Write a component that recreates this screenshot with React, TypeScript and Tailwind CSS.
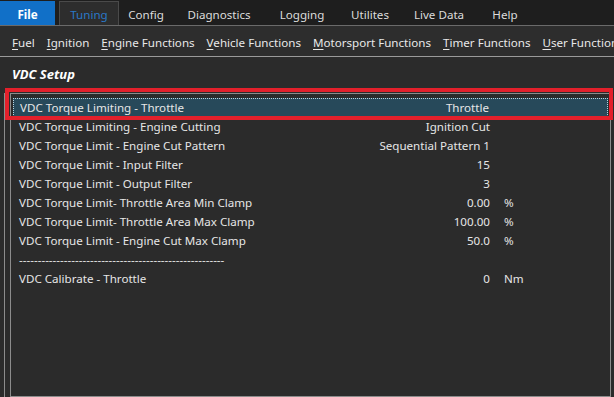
const tabs = [
  { label: 'Config', w: 'w-[54px]' },
  { label: 'Diagnostics', w: 'w-[92px]' },
  { label: 'Logging', w: 'w-[74px]' },
  { label: 'Utilites', w: 'w-[62px]' },
  { label: 'Live Data', w: 'w-[76px]' },
  { label: 'Help', w: 'w-[56px]' },
]

const menus = [
  ['F', 'uel'],
  ['I', 'gnition'],
  ['E', 'ngine Functions'],
  ['V', 'ehicle Functions'],
  ['M', 'otorsport Functions'],
  ['T', 'imer Functions'],
  ['U', 'ser Functions'],
]

const rows = [
  { label: 'VDC Torque Limiting - Throttle', value: 'Throttle', unit: '', selected: true },
  { label: 'VDC Torque Limiting - Engine Cutting', value: 'Ignition Cut', unit: '' },
  { label: 'VDC Torque Limit - Engine Cut Pattern', value: 'Sequential Pattern 1', unit: '' },
  { label: 'VDC Torque Limit - Input Filter', value: '15', unit: '' },
  { label: 'VDC Torque Limit - Output Filter', value: '3', unit: '' },
  { label: 'VDC Torque Limit- Throttle Area Min Clamp', value: '0.00', unit: '%' },
  { label: 'VDC Torque Limit- Throttle Area Max Clamp', value: '100.00', unit: '%' },
  { label: 'VDC Torque Limit - Engine Cut Max Clamp', value: '50.0', unit: '%' },
  { label: '-------------------------------------------------------', value: '', unit: '' },
  { label: 'VDC Calibrate - Throttle', value: '0', unit: 'Nm' },
]

export default function App() {
  return (
    <div
      className="w-[614px] h-[397px] overflow-hidden bg-[#2b2b2b] text-[#e6e6e6] text-[11.6px] flex flex-col relative"
      style={{ fontFamily: '"Noto Sans", "Open Sans", sans-serif' }}
    >
      {/* Tab strip */}
      <div className="h-[26px] bg-[#1e1e1e] flex items-end border-b border-[#6a6a6a] shrink-0">
        <div className="w-[55px] h-[24px] pt-[3px] bg-[#1170c8] text-white font-bold flex items-center justify-center">
          File
        </div>
        <div className="ml-[4px] w-[60px] h-[24px] pt-[3px] bg-[#2d2d2d] border border-b-0 border-[#4a4a4a] text-[#2a78c8] flex items-center justify-center">
          Tuning
        </div>
        {tabs.map(t => (
          <div key={t.label} className={`${t.w} h-[24px] pt-[3px] flex items-center justify-center text-[#dcdcdc]`}>
            {t.label}
          </div>
        ))}
      </div>

      {/* Menu bar */}
      <div className="h-[31px] pt-[3px] bg-[#2d2d2d] border-b border-[#9a9a9a] flex items-center pl-[12px] gap-[12px] whitespace-nowrap shrink-0">
        {menus.map(([first, rest]) => (
          <span key={first + rest} className="text-[#e8e8e8]">
            <span className="underline underline-offset-2">{first}</span>
            {rest}
          </span>
        ))}
      </div>

      {/* Heading */}
      <div className="h-[36px] shrink-0 flex items-center pl-[12px]">
        <span className="font-bold italic text-white text-[13px]">VDC Setup</span>
      </div>

      {/* Panel */}
      <div className="flex-1 flex pl-[4px]">
        <div className="w-[6px] border-l border-[#8c8c8c]" />
        <div className="flex-1 mr-[3px] border border-[#8c8c8c] pt-[4px]">
          {rows.map(r => (
            <div
              key={r.label}
              className={
                r.selected
                  ? 'h-[19px] mx-[2px] flex items-center bg-[#27495a] border border-dotted border-[#b8d4e0] whitespace-nowrap'
                  : 'h-[19px] mx-[2px] flex items-center whitespace-nowrap'
              }
            >
              <span className="flex-1 pl-[6px]">{r.label}</span>
              <span className="w-[200px] text-right">{r.value}</span>
              <span className="w-[118px] pl-[14px]">{r.unit}</span>
            </div>
          ))}
        </div>
      </div>

      {/* Red highlight annotation */}
      <div className="absolute left-[5px] top-[88px] w-[608px] h-[32px] border-[4px] border-[#e3202b] pointer-events-none" />
    </div>
  )
}
